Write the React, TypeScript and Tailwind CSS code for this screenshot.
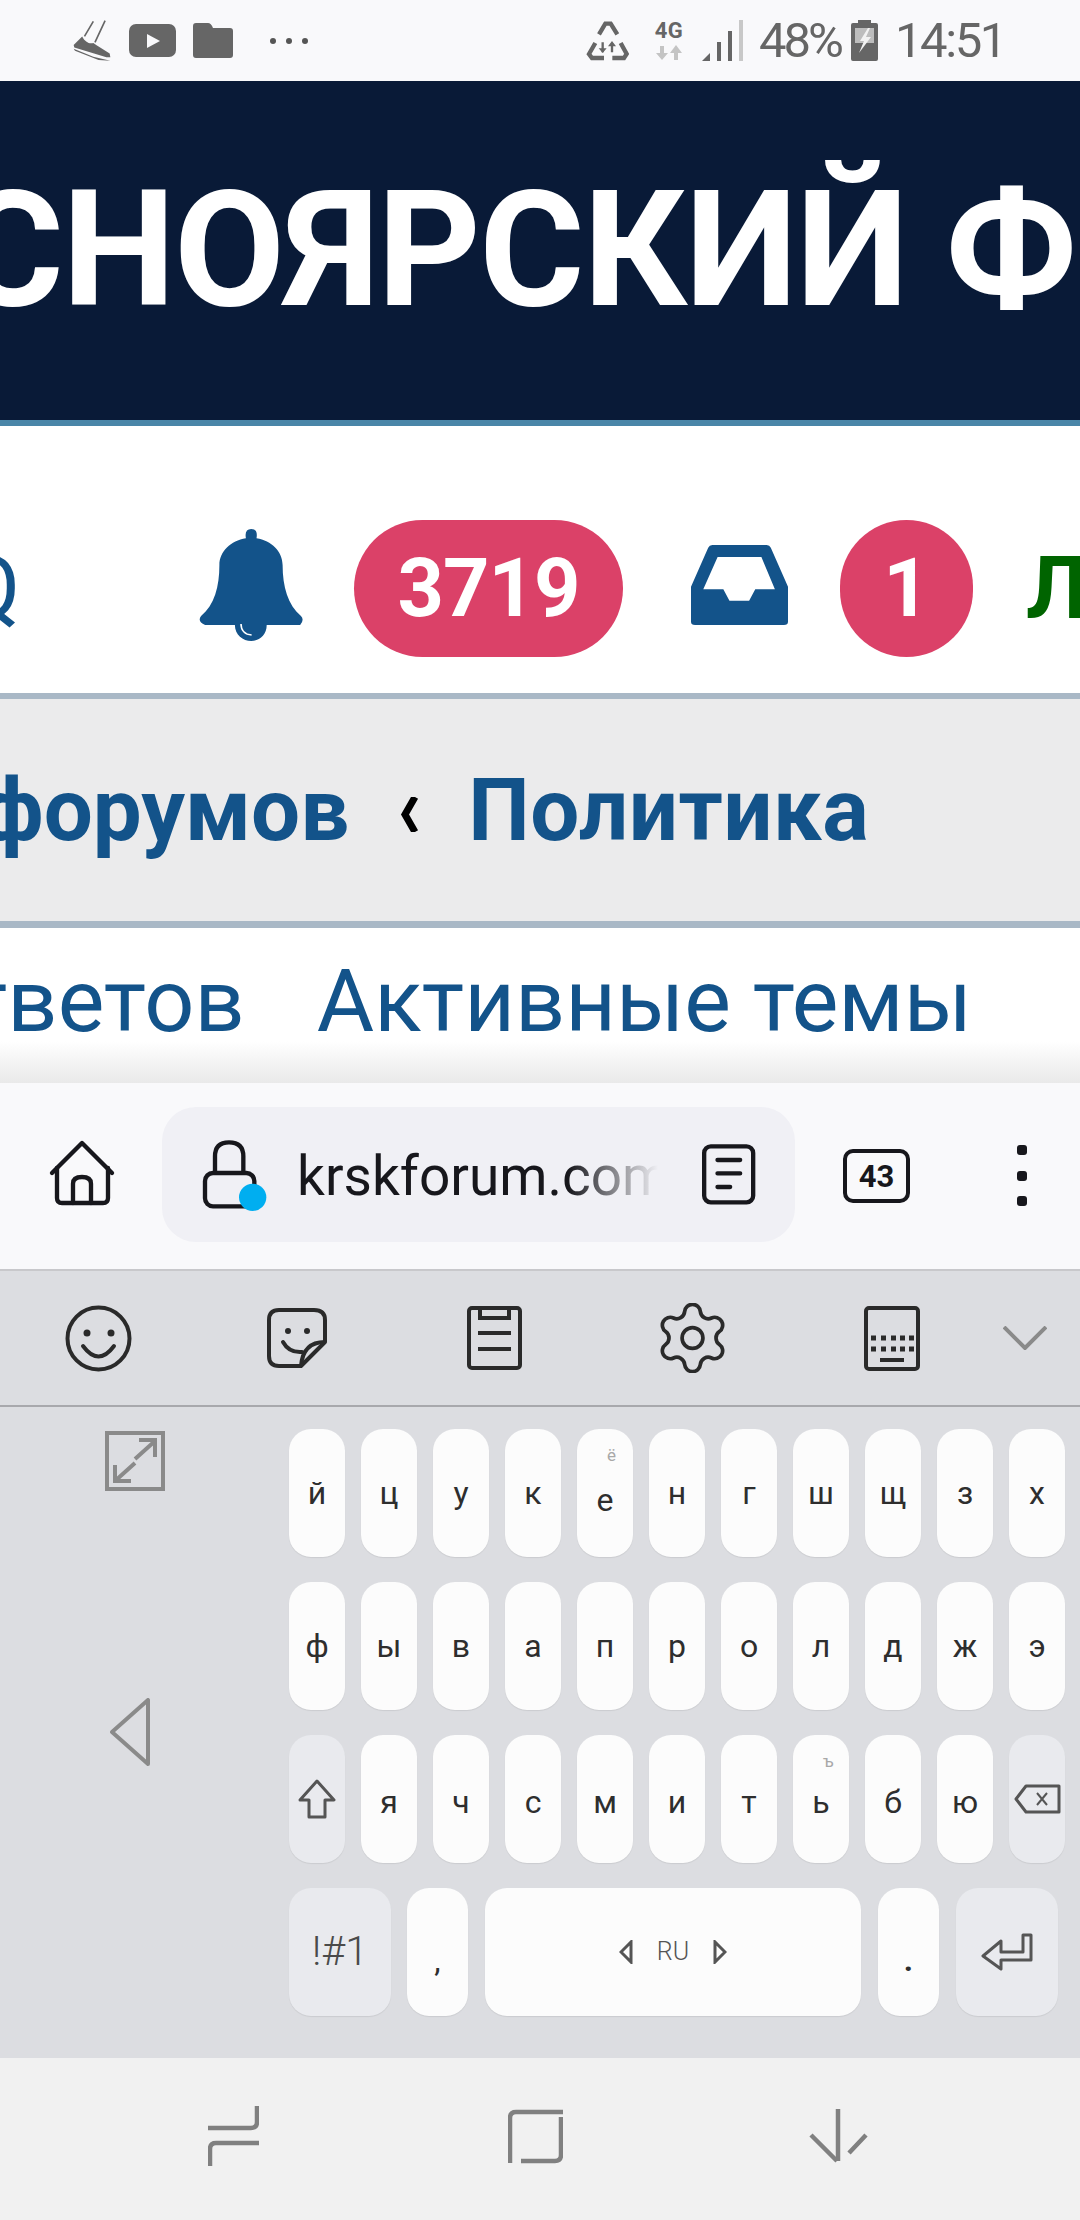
import React from 'react';

const ROW1 = ['й', 'ц', 'у', 'к', 'е', 'н', 'г', 'ш', 'щ', 'з', 'х'];
const ROW2 = ['ф', 'ы', 'в', 'а', 'п', 'р', 'о', 'л', 'д', 'ж', 'э'];
const ROW3 = ['я', 'ч', 'с', 'м', 'и', 'т', 'ь', 'б', 'ю'];

const keyClass =
  'relative flex items-center justify-center rounded-[22px] bg-[#fcfcfc] shadow-[0_1px_1px_rgba(0,0,0,0.08)] text-[#2e2e2e]';
const fnKeyClass =
  'relative flex items-center justify-center rounded-[22px] bg-[#e9eaee] shadow-[0_1px_1px_rgba(0,0,0,0.08)] text-[#4a4a4a]';

const Key = ({ label, hint, shift = 0 }: { label: string; hint?: string; shift?: number }) => (
  <div className={`${keyClass} h-full text-[32px]`}>
    {hint && (
      <span className="absolute top-[18px] left-[30px] text-[17px] leading-none text-[#a8a8a8]">{hint}</span>
    )}
    <span style={shift ? { marginTop: shift } : undefined}>{label}</span>
  </div>
);

const App: React.FC = () => {
  return (
    <div className="w-[1080px] h-[2220px] overflow-hidden bg-white font-['Roboto',sans-serif] flex flex-col">
      {/* Status bar */}
      <div className="h-[81px] shrink-0 bg-[#f9f9fb] flex items-center text-[#666666]">
        <svg className="ml-[73px]" width="38" height="41" viewBox="98 58 116 125" fill="#666666">
          <path d="M160 62 L133 108 M196 60 L165 126" stroke="#666666" strokeWidth="5" fill="none" />
          <path d="M126 108 L100 134 L102 142 L200 172 L212 172 L210 160 L170 135 L160 128 C148 132 134 124 126 108 Z" />
          <path d="M100 146 L160 170 L212 182 L176 180 L104 152 Z" />
        </svg>
        <svg className="ml-[18px]" width="47" height="33" viewBox="0 0 47 33">
          <rect width="47" height="33" rx="7" fill="#666666" />
          <path d="M18 10 L31 17 L18 24 Z" fill="#f9f9fb" />
        </svg>
        <svg className="ml-[17px]" width="40" height="35" viewBox="0 0 40 35" fill="#666666">
          <path d="M0 3 Q0 0 3 0 H15 Q18 0 20 5 H37 Q40 5 40 8 V32 Q40 35 37 35 H3 Q0 35 0 32 Z" />
        </svg>
        <div className="ml-[37px] flex gap-[10px]">
          <div className="w-[6px] h-[6px] rounded-full bg-[#555555]" />
          <div className="w-[6px] h-[6px] rounded-full bg-[#555555]" />
          <div className="w-[6px] h-[6px] rounded-full bg-[#555555]" />
        </div>
        <svg className="ml-[278px]" width="44" height="40" viewBox="76 64 132 120" fill="none" stroke="#666666" strokeWidth="13">
          <path d="M115 104 L134 72 H150 L170 104 M104 130 L85 163 L94 175 H130 M180 130 L198 163 L190 175 H155" />
          <path d="M126 128 V158 M154 158 V130" strokeWidth="7" />
          <path d="M114 146 L126 160 L138 146 Z M142 140 L154 124 L166 140 Z" fill="#666666" stroke="none" />
        </svg>
        <div className="ml-[22px] w-[34px] flex flex-col items-center">
          <span className="text-[22px] leading-[20px] font-bold tracking-[0.5px]">4G</span>
          <svg className="mt-[4px]" width="26" height="16" viewBox="0 0 26 16" fill="#c4c4c4">
            <path d="M4 1 H8 V8 H12 L6 15 L0 8 H4 Z M18 15 H22 V8 H26 L20 0 L14 8 H18 Z" />
          </svg>
        </div>
        <svg className="ml-[16px]" width="41" height="41" viewBox="0 0 41 41">
          <path d="M0 41 L8 33 V41 Z" fill="#666666" />
          <rect x="15" y="22" width="4" height="19" fill="#666666" />
          <rect x="26" y="11" width="4" height="30" fill="#666666" />
          <rect x="37" y="0" width="4" height="41" fill="#c8c8c8" />
        </svg>
        <span className="ml-[16px] text-[49px] leading-none tracking-[-3px]">48%</span>
        <svg className="ml-[10px]" width="27" height="41" viewBox="0 0 27 41">
          <path d="M7 0 H20 V3 H25 Q27 3 27 5 V39 Q27 41 25 41 H2 Q0 41 0 39 V5 Q0 3 2 3 H7 Z" fill="#666666" />
          <rect x="4" y="8" width="19" height="15" fill="#bdbdbd" />
          <path d="M17 8 L9 21 H13 L8 33 L20 17 H15 L19 8 Z" fill="#f2f2f2" />
        </svg>
        <span className="ml-[17px] text-[49px] leading-none tracking-[-2.4px]">14:51</span>
      </div>

      {/* Forum header */}
      <div className="h-[339px] shrink-0 bg-[#091a37] flex items-center overflow-hidden">
        <span className="ml-[-338px] text-[161px] leading-none font-bold text-white whitespace-nowrap tracking-[-1.7px]">
          КРАСНОЯРСКИЙ ФОРУМ
        </span>
      </div>
      <div className="h-[6px] shrink-0 bg-[#4a86a8]" />

      {/* User row */}
      <div className="h-[267px] shrink-0 pt-[57px] flex items-center overflow-hidden text-[#13538a]">
        <span className="ml-[-39px] w-[62px] shrink-0 text-[86px] leading-none">Q</span>
        <svg className="ml-[176px] mt-[-6px] shrink-0" width="104" height="112" viewBox="47 57 255 336" preserveAspectRatio="none" fill="#13538a">
          <path d="M162 85 Q158 57 175 57 Q192 57 188 85 C225 92 252 125 252 165 C252 230 265 285 297 318 Q306 330 295 345 H213 C213 375 195 393 175 393 C155 393 135 375 135 345 H62 Q42 335 52 318 C85 285 97 230 97 165 C97 125 125 92 162 85 Z" />
          <path d="M150 342 C150 362 160 374 176 375" fill="none" stroke="#ffffff" strokeWidth="4" />
        </svg>
        <div className="ml-[51px] w-[269px] h-[137px] shrink-0 rounded-full bg-[#db4168] flex items-center justify-center text-white font-bold text-[81px] leading-none tracking-[-1px]">
          3719
        </div>
        <svg className="ml-[68px] mt-[-6px] shrink-0" width="97" height="80" viewBox="1253 104 237 241" preserveAspectRatio="none">
          <path
            fillRule="evenodd"
            fill="#13538a"
            d="M1305 104 H1438 Q1445 104 1448 112 L1490 230 V335 Q1490 345 1480 345 H1263 Q1253 345 1253 335 V230 L1295 112 Q1298 104 1305 104 Z M1318 140 L1283 237 H1332 L1347 272 H1395 L1410 237 H1458 L1425 140 Z"
          />
        </svg>
        <div className="ml-[52px] w-[133px] h-[137px] shrink-0 rounded-full bg-[#db4168] flex items-center justify-center text-white font-bold text-[81px] leading-none">
          1
        </div>
        <span className="ml-[53px] text-[87px] leading-none font-bold text-[#006400] whitespace-nowrap">Личные</span>
      </div>
      <div className="h-[6px] shrink-0 bg-[#a9b8c6]" />

      {/* Breadcrumb */}
      <div className="h-[222px] shrink-0 bg-[#ebebec] flex items-center overflow-hidden whitespace-nowrap">
        <span className="ml-[-20px] text-[87px] leading-none font-bold text-[#13538a]">форумов</span>
        <svg className="ml-[49px] shrink-0 mt-[8px]" width="22" height="35" viewBox="0 0 22 35">
          <path d="M17 0 L7 17.5 L17 35" fill="none" stroke="#000000" strokeWidth="7" />
        </svg>
        <span className="ml-[48px] text-[87px] leading-none font-bold text-[#13538a] tracking-[0.4px]">Политика</span>
      </div>
      <div className="h-[7px] shrink-0 bg-[#a9b8c6]" />

      {/* Links */}
      <div className="relative h-[155px] shrink-0 flex items-center overflow-hidden whitespace-nowrap text-[#13538a] text-[88px] leading-none">
        <span className="ml-[-35px] mt-[-10px]">тветов</span>
        <span className="ml-[72px] mt-[-10px]">Активные темы</span>
        <div className="absolute left-0 right-0 bottom-0 h-[42px] bg-gradient-to-b from-transparent to-[#e9e9e9]" />
      </div>

      {/* Browser toolbar */}
      <div className="h-[186px] shrink-0 bg-[#f9f9fb] flex items-center">
        <svg className="ml-[47px] mt-[-6px] shrink-0" width="70" height="68" viewBox="50 58 210 204" fill="none" stroke="#17171c" strokeWidth="13" strokeLinecap="round" strokeLinejoin="round">
          <path d="M65 160 L155 70 L245 160" />
          <path d="M80 145 V235 Q80 250 95 250 H218 Q233 250 233 235 V145" />
          <path d="M128 250 V192 Q128 172 155 172 Q182 172 182 192 V250" />
        </svg>
        <div className="ml-[45px] w-[633px] h-[135px] mt-[-3px] shrink-0 rounded-[34px] bg-[#f0f0f5] flex items-center">
          <svg className="ml-[38px] shrink-0 mt-[2px]" width="70" height="75" viewBox="510 55 210 225">
            <rect x="525" y="160" width="148" height="100" rx="24" fill="none" stroke="#17171c" strokeWidth="13" />
            <path d="M555 160 V110 Q555 68 597 68 Q640 68 640 110 V160" fill="none" stroke="#17171c" strokeWidth="13" />
            <circle cx="668" cy="233" r="41" fill="#00aef0" />
          </svg>
          <div className="relative ml-[27px] mt-[4px] w-[361px] overflow-hidden whitespace-nowrap text-[55px] leading-none text-[#17171c]">
            krskforum.com
            <div className="absolute top-0 bottom-0 right-0 w-[90px] bg-gradient-to-r from-transparent to-[#f0f0f5]" />
          </div>
          <svg className="ml-[42px] shrink-0" width="57" height="65" viewBox="60 66 170 195" fill="none" stroke="#17171c" strokeWidth="13">
            <rect x="72" y="79" width="147" height="168" rx="20" />
            <path d="M112 120 H180 M112 160 H180 M112 201 H150" strokeLinecap="round" />
          </svg>
        </div>
        <div className="ml-[48px] w-[67px] h-[54px] shrink-0 rounded-[10px] border-[4px] border-[#17171c] flex items-center justify-center text-[31px] leading-none font-bold text-[#17171c]">
          43
        </div>
        <div className="ml-[107px] flex flex-col gap-[15.5px] mt-[-1px]">
          <div className="w-[10px] h-[10px] rounded-[3px] bg-[#17171c]" />
          <div className="w-[10px] h-[10px] rounded-[3px] bg-[#17171c]" />
          <div className="w-[10px] h-[10px] rounded-[3px] bg-[#17171c]" />
        </div>
      </div>

      {/* Keyboard tool row */}
      <div className="h-[138px] shrink-0 bg-[#dcdde1] border-t-[2px] border-b-[2px] border-t-[#c8c8cb] border-b-[#a8a8ac] flex items-center">
        <svg className="ml-[65px] shrink-0" width="67" height="67" viewBox="0 0 67 67" fill="none" stroke="#2a2a2a" strokeWidth="4">
          <circle cx="33.5" cy="33.5" r="31" />
          <circle cx="22" cy="28" r="3.5" fill="#2a2a2a" stroke="none" />
          <circle cx="46" cy="28" r="3.5" fill="#2a2a2a" stroke="none" />
          <path d="M18 41 Q33.5 62 49 41" strokeLinecap="round" />
        </svg>
        <svg className="ml-[135px] shrink-0" width="60" height="60" viewBox="0 0 60 60" fill="none" stroke="#2a2a2a" strokeWidth="4">
          <path d="M34 58 H12 Q2 58 2 48 V12 Q2 2 12 2 H47 Q58 2 58 12 V34 Z" strokeLinejoin="round" />
          <path d="M58 34 Q36 34 34 58" />
          <circle cx="21" cy="23" r="3" fill="#2a2a2a" stroke="none" />
          <circle cx="40" cy="23" r="3" fill="#2a2a2a" stroke="none" />
          <path d="M16 34 Q22 45 35 44" strokeLinecap="round" />
        </svg>
        <svg className="ml-[140px] shrink-0" width="55" height="64" viewBox="0 0 55 64" fill="none" stroke="#2a2a2a" strokeWidth="4">
          <rect x="2" y="2" width="51" height="60" rx="3" />
          <path d="M13 2 V12 H42 V2" />
          <path d="M11 27 H44 M11 43 H44" />
        </svg>
        <svg className="ml-[136px] shrink-0" width="69" height="70" viewBox="2.6 1.6 18.8 20.8" fill="none" stroke="#2a2a2a" strokeWidth="1.1">
          <path d="M9.671 4.136a2.34 2.34 0 0 1 4.659 0 2.34 2.34 0 0 0 3.319 1.915 2.34 2.34 0 0 1 2.33 4.033 2.34 2.34 0 0 0 0 3.831 2.34 2.34 0 0 1-2.33 4.033 2.34 2.34 0 0 0-3.319 1.915 2.34 2.34 0 0 1-4.659 0 2.34 2.34 0 0 0-3.32-1.915 2.34 2.34 0 0 1-2.33-4.033 2.34 2.34 0 0 0 0-3.831A2.34 2.34 0 0 1 6.35 6.051a2.34 2.34 0 0 0 3.319-1.915" />
          <circle cx="12" cy="12" r="3.1" />
        </svg>
        <svg className="ml-[137px] shrink-0" width="56" height="65" viewBox="0 0 56 65" fill="none" stroke="#2a2a2a" strokeWidth="4">
          <rect x="2" y="2" width="52" height="61" rx="3" />
          <path d="M7 32 h5 M17 32 h5 M27 32 h5 M36 32 h5 M45 32 h5 M7 43 h5 M17 43 h5 M27 43 h5 M36 43 h5 M45 43 h5" strokeWidth="5" />
          <path d="M16 54 H40" />
        </svg>
        <svg className="ml-[83px] shrink-0" width="44" height="24" viewBox="0 0 44 24" fill="none" stroke="#8a8a8a" strokeWidth="4">
          <path d="M1 1 L22 22 L43 1" />
        </svg>
      </div>

      {/* Keyboard */}
      <div className="flex-1 min-h-0 bg-[#dcdde1] flex">
        <div className="w-[289px] shrink-0 flex flex-col">
          <svg className="ml-[105px] mt-[24px]" width="60" height="60" viewBox="0 0 60 60" fill="none" stroke="#8a8a8a" strokeWidth="4">
            <rect x="2" y="2" width="56" height="56" />
            <path d="M30 28 L50 10 M34 9 H50 V26 M30 32 L10 50 M10 34 V50 H26" />
          </svg>
          <svg className="ml-[110px] mt-[207px]" width="40" height="68" viewBox="0 0 40 68" fill="none" stroke="#8a8a8a" strokeWidth="4" strokeLinejoin="round">
            <path d="M38 2 V66 L2 34 Z" />
          </svg>
        </div>
        <div className="w-[776px] shrink-0 pt-[22px] flex flex-col gap-[25px]">
          <div className="h-[128px] grid grid-cols-11 gap-x-[16px]">
            {ROW1.map((k) => (
              <Key key={k} label={k} hint={k === 'е' ? 'ё' : undefined} shift={k === 'е' ? 14 : 0} />
            ))}
          </div>
          <div className="h-[128px] grid grid-cols-11 gap-x-[16px]">
            {ROW2.map((k) => (
              <Key key={k} label={k} />
            ))}
          </div>
          <div className="h-[128px] grid grid-cols-11 gap-x-[16px]">
            <div className={`${fnKeyClass} h-full`}>
              <svg width="38" height="40" viewBox="0 0 38 40" fill="none" stroke="#555555" strokeWidth="3" strokeLinejoin="round">
                <path d="M19 2 L36 21 H27 V38 H11 V21 H2 Z" />
              </svg>
            </div>
            {ROW3.map((k) => (
              <Key key={k} label={k} hint={k === 'ь' ? 'ъ' : undefined} shift={6} />
            ))}
            <div className={`${fnKeyClass} h-full`}>
              <svg width="47" height="30" viewBox="0 0 47 30" fill="none" stroke="#555555" strokeWidth="3" strokeLinejoin="round">
                <path d="M12 2 H45 V28 H12 L2 15 Z" />
                <path d="M23 9 L33 21 M33 9 L23 21" strokeWidth="2" />
              </svg>
            </div>
          </div>
          <div className="h-[128px] flex">
            <div className={`${fnKeyClass} w-[102px] h-full text-[41px] font-light`}>!#1</div>
            <div className={`${keyClass} ml-[16px] w-[61px] h-full text-[32px]`}>
              <span className="mt-[16px]">,</span>
            </div>
            <div className={`${keyClass} ml-[17px] w-[376px] h-full gap-[24px]`}>
              <svg width="14" height="24" viewBox="0 0 14 24" fill="none" stroke="#555555" strokeWidth="3">
                <path d="M12 2 V22 L2 12 Z" />
              </svg>
              <span className="text-[25px] font-light text-[#555555]">RU</span>
              <svg width="14" height="24" viewBox="0 0 14 24" fill="none" stroke="#555555" strokeWidth="3">
                <path d="M2 2 V22 L12 12 Z" />
              </svg>
            </div>
            <div className={`${keyClass} ml-[17px] w-[61px] h-full text-[32px]`}>
              <span className="mt-[16px] font-bold">.</span>
            </div>
            <div className={`${fnKeyClass} ml-[17px] w-[102px] h-full`}>
              <svg width="52" height="38" viewBox="0 0 52 38" fill="none" stroke="#555555" strokeWidth="3" strokeLinejoin="round">
                <path d="M50 2 H42 V19 H20 V8 L2 23 L20 36 V27 H50 Z" />
              </svg>
            </div>
          </div>
        </div>
      </div>

      {/* Navigation bar */}
      <div className="h-[162px] shrink-0 bg-[#f1f1f1] flex items-center">
        <svg className="ml-[208px] mt-[-6px]" width="51" height="60" viewBox="0 0 51 60" fill="none" stroke="#808080" strokeWidth="4.5">
          <path d="M49 0 V16 Q49 22 43 22 H0" />
          <path d="M51 37 H8 Q2 37 2 43 V60" />
        </svg>
        <svg className="ml-[249px] mt-[-6px]" width="55" height="55" viewBox="0 0 55 55" fill="none" stroke="#808080" strokeWidth="4.5">
          <path d="M55 3 H8 Q2 3 2 9 V54" />
          <path d="M53 8 V46 Q53 52 47 52 H13" />
        </svg>
        <svg className="ml-[246px] mt-[-6px]" width="59" height="54" viewBox="0 0 59 54" fill="none" stroke="#808080" strokeWidth="4.5">
          <path d="M29 0 V52" />
          <path d="M2 26 L28 52 M57 26 L40 44" />
        </svg>
      </div>
    </div>
  );
};

export default App;
